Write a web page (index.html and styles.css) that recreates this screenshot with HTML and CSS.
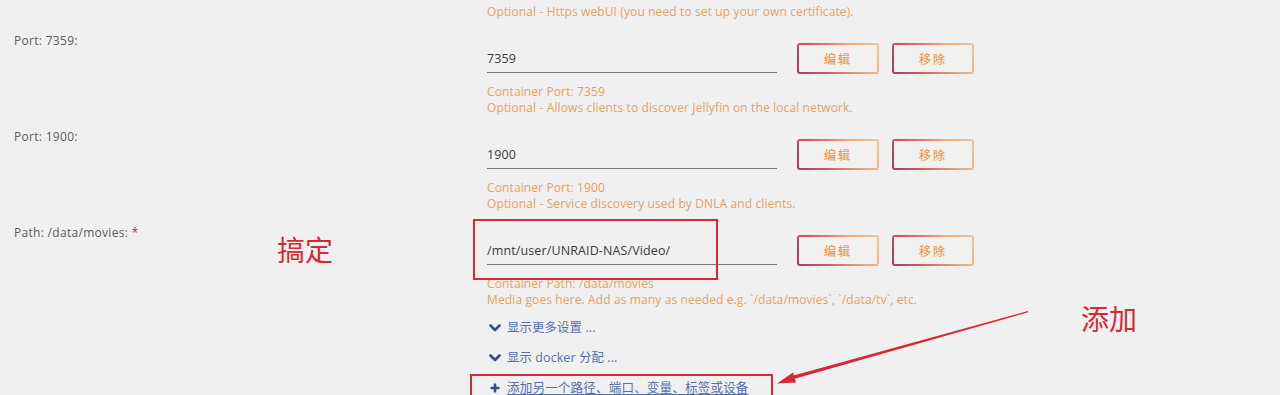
FILE: index.html
```html
<!DOCTYPE html>
<html lang="zh">
<head>
<meta charset="utf-8">
<title>Docker 容器设置</title>
<link rel="stylesheet" href="styles.css">
</head>
<body>
<div class="page">
  <div class="form">
    <div class="row row-partial">
      <div class="label"></div>
      <div class="field">
        <div class="desc">
          <div>Container Port: 8920</div>
          <div>Optional - Https webUI (you need to set up your own certificate).</div>
        </div>
      </div>
    </div>

    <div class="row">
      <div class="label">Port: 7359:</div>
      <div class="field">
        <div class="controls">
          <div class="input">7359</div>
          <button class="btn">编辑</button>
          <button class="btn">移除</button>
        </div>
        <div class="desc">
          <div>Container Port: 7359</div>
          <div>Optional - Allows clients to discover Jellyfin on the local network.</div>
        </div>
      </div>
    </div>

    <div class="row">
      <div class="label">Port: 1900:</div>
      <div class="field">
        <div class="controls">
          <div class="input">1900</div>
          <button class="btn">编辑</button>
          <button class="btn">移除</button>
        </div>
        <div class="desc">
          <div>Container Port: 1900</div>
          <div>Optional - Service discovery used by DNLA and clients.</div>
        </div>
      </div>
    </div>

    <div class="row">
      <div class="label">Path: /data/movies: <span class="req">*</span></div>
      <div class="field">
        <div class="controls">
          <div class="input">/mnt/user/UNRAID-NAS/Video/</div>
          <button class="btn">编辑</button>
          <button class="btn">移除</button>
        </div>
        <div class="desc">
          <div>Container Path: /data/movies</div>
          <div>Media goes here. Add as many as needed e.g. `/data/movies`, `/data/tv`, etc.</div>
        </div>
      </div>
    </div>

    <div class="links">
      <div class="link">
        <svg class="chev" viewBox="0 0 12 10" width="12" height="10"><path d="M1.5 2.5 L6 7 L10.5 2.5" fill="none" stroke="#34508c" stroke-width="2.6" stroke-linecap="round" stroke-linejoin="round"/></svg>
        <span>显示更多设置 ...</span>
      </div>
      <div class="link">
        <svg class="chev" viewBox="0 0 12 10" width="12" height="10"><path d="M1.5 2.5 L6 7 L10.5 2.5" fill="none" stroke="#34508c" stroke-width="2.6" stroke-linecap="round" stroke-linejoin="round"/></svg>
        <span>显示 docker 分配 ...</span>
      </div>
      <div class="link add">
        <svg class="plus" viewBox="0 0 10 10" width="10" height="10"><path d="M5 0.5 V9.5 M0.5 5 H9.5" fill="none" stroke="#34508c" stroke-width="2.6"/></svg>
        <span class="u">添加另一个路径、端口、变量、标签或设备</span>
      </div>
    </div>
  </div>

  <div class="mark box-path"></div>
  <div class="mark box-add"></div>
  <div class="note note-done">搞定</div>
  <div class="note note-add">添加</div>
  <svg class="arrow" width="1280" height="395" viewBox="0 0 1280 395">
    <polygon points="1028,311 1028.3,312.2 792,379.5 790.8,376.3" fill="#d42a35"/>
    <polygon points="777,383.5 793,372.5 796,382.5" fill="#d42a35"/>
  </svg>
</div>
</body>
</html>
```

FILE: styles.css
```css
html, body {
  margin: 0;
  padding: 0;
  background: #f1f0f1;
}
body {
  font-family: "Open Sans", "Noto Sans CJK SC", sans-serif;
  font-size: 12px;
  letter-spacing: 0.12px;
  color: #555;
  overflow: hidden;
}
.page {
  position: relative;
  width: 1280px;
  height: 395px;
  overflow: hidden;
}
.form {
  display: flex;
  flex-direction: column;
}
.row {
  display: grid;
  grid-template-columns: 487px 1fr;
  margin-bottom: 13px;
}
.row-partial {
  margin-top: -22px;
}
.label {
  padding-left: 14px;
  line-height: 16px;
  color: #5c5c5c;
  letter-spacing: 0.3px;
}
.req {
  color: #e0262f;
}
.field {
  display: flex;
  flex-direction: column;
}
.controls {
  display: flex;
  align-items: flex-start;
  margin-top: 10px;
  height: 31px;
}
.input {
  width: 290px;
  height: 30px;
  box-sizing: border-box;
  border-bottom: 1px solid #7a7a7a;
  line-height: 31px;
  color: #3a3a3a;
  font-size: 12.5px;
}
.btn {
  width: 82px;
  height: 31px;
  box-sizing: border-box;
  margin-left: 20px;
  font-family: "Noto Sans CJK SC", sans-serif;
  font-size: 12px;
  font-weight: 500;
  letter-spacing: 2px;
  color: #f29a45;
  border: 2px solid transparent;
  border-radius: 3px;
  background:
    linear-gradient(#f2f1f1, #f2f1f1) padding-box,
    linear-gradient(60deg, #a53a5c 0%, #d25a66 30%, #f3a86f 70%, #f8c29a 100%) border-box;
  padding: 0;
}
.btn + .btn {
  margin-left: 13px;
}
.desc {
  margin-top: 10px;
  line-height: 16px;
  color: #eaa055;
}
.links {
  padding-left: 487px;
  margin-top: -1px;
  display: flex;
  flex-direction: column;
  gap: 14px;
}
.link {
  display: flex;
  align-items: center;
  gap: 6px;
  line-height: 16px;
  font-size: 12.4px;
  color: #5370ad;
}
.chev {
  display: block;
  margin-left: 2px;
}
.plus {
  display: block;
  margin-left: 3px;
  margin-right: 1px;
}
.add .u {
  font-size: 12.6px;
}
.u {
  text-decoration: underline;
  text-underline-offset: 2px;
}
.mark {
  position: absolute;
  border: 2px solid #d42a35;
  box-sizing: border-box;
}
.box-path {
  left: 473px;
  top: 219px;
  width: 245px;
  height: 61px;
}
.box-add {
  left: 470px;
  top: 374px;
  width: 303px;
  height: 30px;
}
.note {
  position: absolute;
  font-family: "Noto Sans CJK SC", sans-serif;
  font-size: 28px;
  line-height: 32px;
  color: #d42a35;
}
.note-done {
  left: 277px;
  top: 233px;
}
.note-add {
  left: 1081px;
  top: 302px;
}
.arrow {
  position: absolute;
  left: 0;
  top: 0;
}
```
